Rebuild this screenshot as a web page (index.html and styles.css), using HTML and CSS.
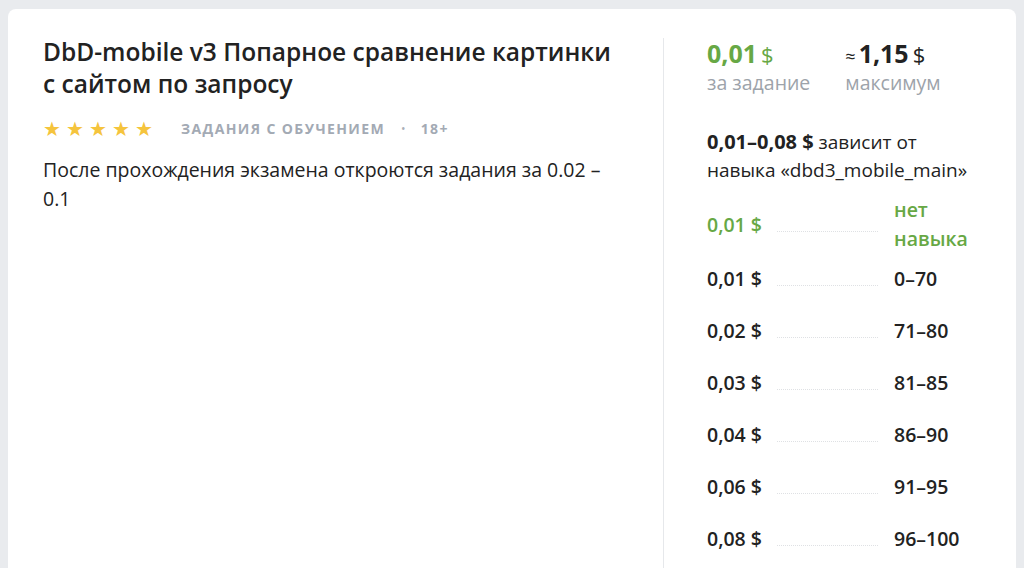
FILE: index.html
```html
<!DOCTYPE html>
<html lang="ru">
  <head>
    <meta charset="UTF-8" />
    <meta name="viewport" content="width=device-width, initial-scale=1.0" />
    <title>DbD-mobile v3</title>
    <link rel="stylesheet" href="styles.css">
  </head>
  <body>
    <div class="card">
      <div class="main">
        <h1 class="title">DbD-mobile v3 Попарное сравнение картинки с сайтом по запросу</h1>

        <div class="meta">
          <div class="stars">
            <span>★</span><span>★</span><span>★</span><span>★</span><span>★</span>
          </div>
          <span class="tag">Задания с обучением</span>
          <span class="dot">•</span>
          <span class="tag">18+</span>
        </div>

        <p class="desc">После прохождения экзамена откроются задания за 0.02 – 0.1</p>
      </div>

      <div class="side">
        <div class="prices">
          <div class="price">
            <div class="price-value green">0,01<span class="cur">$</span></div>
            <div class="price-label">за задание</div>
          </div>
          <div class="price">
            <div class="price-value"><span class="approx">≈</span>1,15<span class="cur">$</span></div>
            <div class="price-label">максимум</div>
          </div>
        </div>

        <p class="skill-note"><b>0,01–0,08 $</b> зависит от навыка «dbd3_mobile_main»</p>

        <div class="levels" id="levels"></div>
      </div>
    </div>

    <script>
      const levels = [
        ['0,01 $', 'нет навыка', true],
        ['0,01 $', '0–70'],
        ['0,02 $', '71–80'],
        ['0,03 $', '81–85'],
        ['0,04 $', '86–90'],
        ['0,06 $', '91–95'],
        ['0,08 $', '96–100']
      ]

      const box = document.getElementById('levels')
      levels.forEach(([price, range, current]) => {
        const row = document.createElement('div')
        row.className = current ? 'level level-current' : 'level'
        row.innerHTML = `
          <span class="level-price">${price}</span>
          <span class="level-dots"></span>
          <span class="level-range">${range}</span>
        `
        box.appendChild(row)
      })
    </script>
  </body>
</html>
```

FILE: styles.css
```css
body {
  margin: 0;
  padding: 9px 8px 0;
  background: #e9ebee;
  font-family: "Open Sans", "Noto Sans", sans-serif;
  color: #222;
}

.card {
  background: #fff;
  border-radius: 8px;
  display: grid;
  grid-template-columns: 1fr 353px;
  min-height: 600px;
}

.main {
  padding: 27px 38px 0 35px;
}

.title {
  margin: 0;
  font-size: 24.5px;
  line-height: 32px;
  font-weight: 600;
}

.meta {
  display: flex;
  align-items: center;
  margin-top: 15px;
  height: 26px;
}

.stars {
  display: flex;
  gap: 5px;
  color: #f5c43d;
  font-size: 20px;
  margin-right: 28px;
}

.tag {
  font-size: 14px;
  font-weight: 700;
  letter-spacing: 1.4px;
  text-transform: uppercase;
  color: #a3aab4;
}

.dot {
  color: #aab0b8;
  font-size: 12px;
  margin: 0 15px 0 16px;
}

.desc {
  margin: 14px 0 0;
  font-size: 19.5px;
  line-height: 29px;
}

.side {
  margin-top: 29px;
  border-left: 1px solid #e6e8eb;
  padding: 0 38px 0 43px;
}

.prices {
  display: flex;
  gap: 35px;
}

.price-value {
  height: 30px;
  font-size: 25px;
  font-weight: 700;
  line-height: 30px;
}

.green {
  color: #67a845;
}

.cur {
  font-size: 22px;
  font-weight: 400;
  line-height: 1;
  margin-left: 4px;
}

.approx {
  font-size: 18px;
  font-weight: 400;
  line-height: 1;
  margin-right: 3px;
}

.price-label {
  font-size: 19.5px;
  line-height: 30px;
  color: #9da3aa;
}

.skill-note {
  max-width: 268px;
  margin: 30px 0 0;
  font-size: 19px;
  line-height: 28px;
}

.skill-note b {
  font-size: 20px;
  line-height: 1;
}

.levels {
  margin-top: 12px;
}

.level {
  display: flex;
  align-items: center;
  height: 52px;
  font-size: 19.5px;
  font-weight: 600;
}

.level-current {
  height: 56px;
  color: #67a845;
}

.level-price {
  width: 70px;
}

.level-dots {
  flex: 1;
  align-self: center;
  margin-top: 14px;
  border-bottom: 1px dotted #dfe1e4;
}

.level-range {
  width: 84px;
  margin-left: 16px;
  line-height: 29px;
}
```
